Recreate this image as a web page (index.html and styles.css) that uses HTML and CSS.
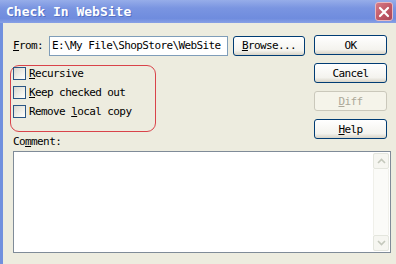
FILE: index.html
```html
<!DOCTYPE html>
<html lang="en">
<head>
  <meta charset="UTF-8" />
  <title>Check In WebSite</title>
  <link rel="stylesheet" href="styles.css">
</head>
<body>
  <div class="window">
    <div class="titlebar">
      <span class="title">Check In WebSite</span>
      <span class="close">
        <svg width="12" height="12" viewBox="0 0 12 12">
          <path d="M2 2 L10 10 M10 2 L2 10" stroke="#fff" stroke-width="2.2" stroke-linecap="round" fill="none" />
        </svg>
      </span>
    </div>

    <div class="frame">
      <div class="top">
        <div class="main">
          <div class="from-row">
            <span class="label"><u>F</u>rom:</span>
            <div class="field">E:\My File\ShopStore\WebSite</div>
            <button class="btn browse"><u>B</u>rowse...</button>
          </div>

          <div class="options">
            <label class="check"><span class="box"></span><span><u>R</u>ecursive</span></label>
            <label class="check"><span class="box"></span><span><u>K</u>eep checked out</span></label>
            <label class="check"><span class="box"></span><span>Remove <u>l</u>ocal copy</span></label>
          </div>

          <div class="label comment-label">Co<u>m</u>ment:</div>
        </div>

        <div class="actions">
          <button class="btn">OK</button>
          <button class="btn">Cancel</button>
          <button class="btn disabled"><u>D</u>iff</button>
          <button class="btn"><u>H</u>elp</button>
        </div>
      </div>

      <div class="comment-box">
        <div class="scrollbar">
          <div class="sb-btn">
            <svg width="9" height="6" viewBox="0 0 9 6"><path d="M1 5 L4.5 1.5 L8 5" stroke="#c4c8bc" stroke-width="1.6" fill="none" /></svg>
          </div>
          <div class="sb-track"></div>
          <div class="sb-btn">
            <svg width="9" height="6" viewBox="0 0 9 6"><path d="M1 1 L4.5 4.5 L8 1" stroke="#c4c8bc" stroke-width="1.6" fill="none" /></svg>
          </div>
        </div>
      </div>
    </div>
  </div>
</body>
</html>
```

FILE: styles.css
```css
body {
  margin: 0;
  font-family: "DejaVu Sans Mono", "Liberation Mono", monospace;
  font-size: 11px;
  letter-spacing: -0.6px;
  color: #000;
}

.window {
  width: 396px;
  height: 264px;
  background: #edecdf;
  display: flex;
  flex-direction: column;
  overflow: hidden;
}

/* title bar */
.titlebar {
  height: 23px;
  display: flex;
  align-items: center;
  justify-content: space-between;
  padding: 0 3px 0 6px;
  background: linear-gradient(#96ade9, #7a95e1 35%, #6f8cde 80%, #88a1e5);
}

.title {
  color: #fff;
  font-weight: bold;
  font-size: 13px;
  letter-spacing: 0;
  text-shadow: 1px 1px 0 #5470c4;
}

.close {
  width: 18px;
  height: 19px;
  box-sizing: border-box;
  display: flex;
  align-items: center;
  justify-content: center;
  border: 1px solid #e8b9c0;
  border-radius: 3px;
  background: linear-gradient(135deg, #d77a86, #bd5563 60%, #a9485a);
}

/* dialog body */
.frame {
  flex: 1;
  border-left: 3px solid #7190de;
  padding: 12px 0 0 10px;
}

.top {
  display: flex;
}

.main {
  width: 301px;
}

.from-row {
  height: 21px;
  display: flex;
  align-items: center;
}

.label {
  width: 36px;
  line-height: 12px;
}

.field {
  width: 179px;
  height: 20px;
  box-sizing: border-box;
  border: 1px solid #7f9db9;
  background: #fff;
  padding-left: 2px;
  line-height: 18px;
  white-space: nowrap;
  overflow: hidden;
}

.options {
  width: 146px;
  height: 67px;
  box-sizing: border-box;
  margin: 9px 0 0 -3px;
  padding: 1px 0 0 2px;
  border: 1px solid #d9434a;
  border-radius: 9px;
  display: flex;
  flex-direction: column;
  gap: 6px;
}

.check {
  height: 13px;
  display: flex;
  align-items: center;
  white-space: pre;
}

.box {
  width: 13px;
  height: 13px;
  box-sizing: border-box;
  margin-right: 3px;
  border: 1px solid #2a5685;
  background: linear-gradient(135deg, #d8d8d0, #f4f4ef 70%, #fff);
}

.comment-label {
  width: auto;
  margin-top: 4px;
  height: 12px;
}

/* buttons */
.actions {
  display: flex;
  flex-direction: column;
  gap: 8px;
}

.btn {
  width: 73px;
  height: 20px;
  padding: 0;
  font-family: inherit;
  font-size: 11px;
  letter-spacing: -0.6px;
  color: #000;
  border: 1px solid #003c74;
  border-radius: 3px;
  background: linear-gradient(#ffffff, #f4f3ee 75%, #d8d4c8);
}

.browse {
  width: 72px;
  margin-left: 5px;
}

.btn.disabled {
  color: #aca899;
  border-color: #cac8bb;
  background: #f5f4ea;
}

/* comment area */
.comment-box {
  width: 378px;
  height: 102px;
  box-sizing: border-box;
  margin-top: 3px;
  border: 1px solid #7f8b98;
  background: #fff;
  display: flex;
  justify-content: flex-end;
  padding: 1px 1px 1px 0;
}

.scrollbar {
  width: 16px;
  display: flex;
  flex-direction: column;
  background: #fbfbf8;
}

.sb-btn {
  height: 16px;
  box-sizing: border-box;
  border: 1px solid #e4e6de;
  border-radius: 2px;
  background: #f6f6f1;
  display: flex;
  align-items: center;
  justify-content: center;
}

.sb-track {
  flex: 1;
  border-left: 1px solid #f0f0ea;
  border-right: 1px solid #f0f0ea;
}
```
